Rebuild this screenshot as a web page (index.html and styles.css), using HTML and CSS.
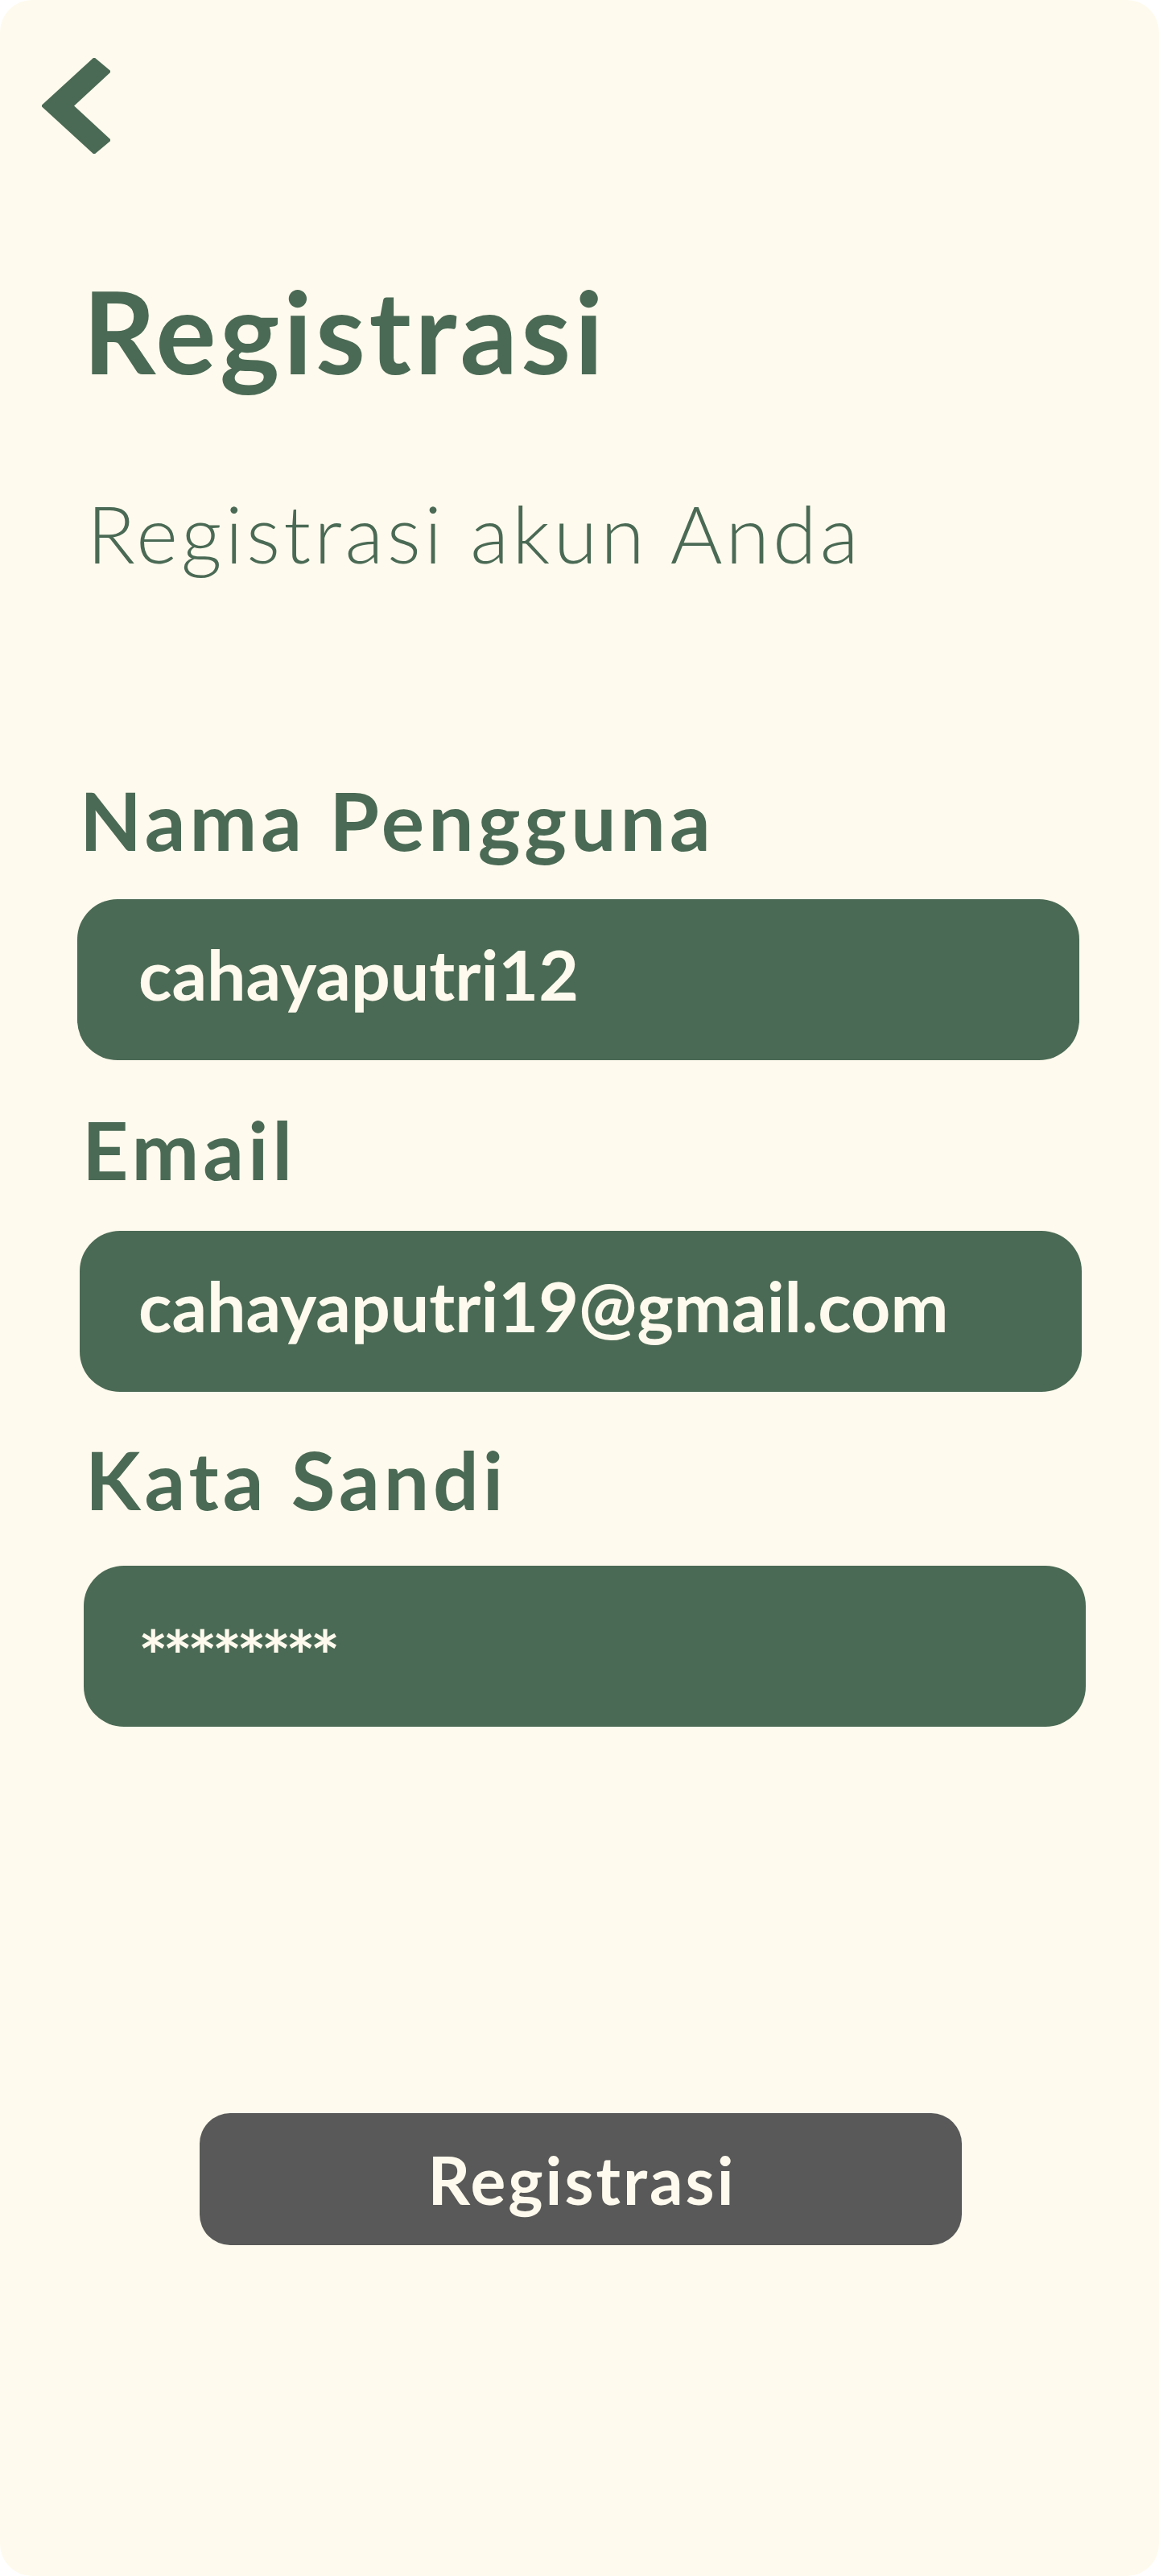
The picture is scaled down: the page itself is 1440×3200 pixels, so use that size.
FILE: index.html
```html
<!DOCTYPE html>
<html lang="id">
<head>
<meta charset="utf-8">
<title>Registrasi</title>
<link rel="stylesheet" href="styles.css">
</head>
<body>
<main class="card">
  <a class="back" href="#" aria-label="Kembali">
    <svg width="85" height="119" viewBox="-1 -1 85 119" aria-hidden="true">
      <polygon points="0,58.5 64,0 83,16 37,58.5 83,101 64,117" fill="#4b6a55" stroke="#4b6a55" stroke-width="3" stroke-linejoin="round"/>
    </svg>
  </a>
  <h1 class="title">Registrasi</h1>
  <p class="subtitle">Registrasi akun Anda</p>

  <form class="form">
    <div class="field field--user">
      <label class="label">Nama Pengguna</label>
      <div class="input">cahayaputri12</div>
    </div>
    <div class="field field--email">
      <label class="label">Email</label>
      <div class="input">cahayaputri19@gmail.com</div>
    </div>
    <div class="field field--pass">
      <label class="label">Kata Sandi</label>
      <div class="input input--pass">********</div>
    </div>
    <div class="actions">
      <button type="button" class="btn">Registrasi</button>
    </div>
  </form>
</main>
</body>
</html>
```
FILE: styles.css
```css
html, body {
  margin: 0;
  padding: 0;
  background: #ffffff;
}
body {
  font-family: Lato, "Open Sans", sans-serif;
  color: #4b6a55;
}
.card {
  box-sizing: border-box;
  width: 1440px;
  min-height: 3200px;
  background: #fefaed;
  border-radius: 40px;
  padding: 72px 0 0 0;
}
.back {
  display: block;
  width: 85px;
  height: 119px;
  margin-left: 52px;
}
.back svg { display: block; }
.title {
  margin: 149px 0 0 103px;
  font-size: 141px;
  line-height: 1;
  font-weight: 700;
  letter-spacing: 4.4px;
}
.subtitle {
  margin: 131px 0 0 108px;
  font-size: 99px;
  line-height: 1;
  font-weight: 300;
  letter-spacing: 4.2px;
}
.form {
  margin-top: 257px;
  display: flex;
  flex-direction: column;
}
.field {
  display: flex;
  flex-direction: column;
  width: 1245px;
}
.label {
  font-size: 100px;
  line-height: 1;
  font-weight: 700;
  margin-left: 3px;
  letter-spacing: 5px;
}
.input {
  box-sizing: border-box;
  height: 200px;
  background: #4b6a55;
  border-radius: 50px;
  padding: 50px 0 0 74px;
  color: #fefaed;
  font-size: 86px;
  line-height: 1;
  font-weight: 700;
}
.field--user { margin-left: 96px; }
.field--user .input { margin-top: 49px; padding-left: 76px; }
.field--email { margin-left: 99px; margin-top: 60px; }
.field--email .input { margin-top: 52px; padding-left: 73px; }
.field--pass { margin-left: 104px; margin-top: 58px; }
.field--pass .label { margin-left: 2px; }
.field--pass .input { margin-top: 58px; padding-left: 68px; }
.input--pass {
  padding-top: 68px;
  letter-spacing: -6px;
}
.actions {
  display: flex;
  margin: 480px 0 0 248px;
}
.btn {
  width: 947px;
  height: 164px;
  border: 0;
  border-radius: 38px;
  background: #595959;
  color: #fefaed;
  font-family: Lato, "Open Sans", sans-serif;
  font-size: 82px;
  font-weight: 700;
  line-height: 1;
  letter-spacing: 3px;
  padding: 0 0 0 3px;
}
```
